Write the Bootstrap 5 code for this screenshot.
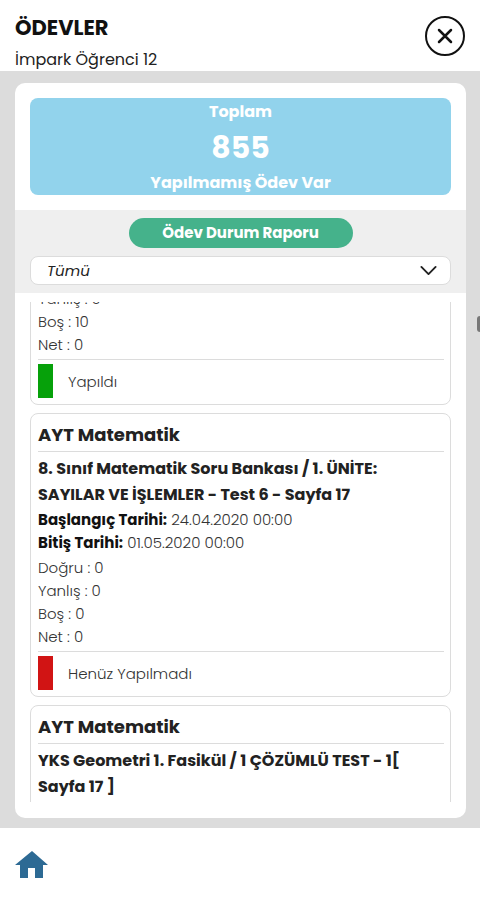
<!DOCTYPE html>
<html lang="tr">
<head>
<meta charset="utf-8">
<meta name="viewport" content="width=device-width, initial-scale=1">
<title>Ödevler</title>
<link href="https://cdn.jsdelivr.net/npm/bootstrap@5.3.0/dist/css/bootstrap.min.css" rel="stylesheet">
<style>
body{font-family:Poppins,Inter,"Liberation Sans",sans-serif;font-size:15px;line-height:23px;color:#333}
.page-title{font-size:21px;line-height:26px;color:#111}
.student{font-size:16px;line-height:22px;color:#222}
.app-header{padding:15px 15px 0}
.close-btn{width:40px;height:40px}
.stage{background:#dcdcdc;padding:12px 14px 10px 15px}
.panel{border-radius:10px}
.summary{background:#92d3ec;border-radius:8px;margin:15px 15px 15px;font-size:16px;line-height:28px;height:97px}
.summary-count{font-size:30px;line-height:43px}
.filters{background:#efefef;padding:8px 15px}
.report-btn,.report-btn:hover{background:#45b28b;color:#fff;width:224px;height:30px;font-size:15px;line-height:30px}
.filter-select{height:29px;font-size:15px;line-height:23px;border-radius:8px;border-color:#dcdcdc;color:#222;padding:2px 40px 2px 16px;background-size:19px 19px;background-position:right 12px center}
.filter-select{--bs-form-select-bg-img:none;background-image:url("data:image/svg+xml,%3csvg xmlns='http://www.w3.org/2000/svg' viewBox='0 0 16 16'%3e%3cpath fill='none' stroke='%23222' stroke-linecap='round' stroke-linejoin='round' stroke-width='1.6' d='m2 5 6 6 6-6'/%3e%3c/svg%3e")}
.task-list{margin:9px 15px 16px;gap:8px;scrollbar-width:none}
.task-list::-webkit-scrollbar{display:none}
.task{border:1px solid #dcdcdc;border-radius:8px;padding:5px 6px 6px 7px;font-weight:300}
.task:last-child{padding-bottom:30px}
.task-title{font-size:18px;line-height:32px;color:#222;border-bottom:1px solid #dcdcdc;margin-bottom:4px}
.task-link,.task-link:hover{font-size:16px;line-height:26px;color:#222}
.task-score{margin-top:2px}
.task-status{border-top:1px solid #dcdcdc;margin-top:3px;padding-top:4px;gap:15px}
.flag{width:15px;height:34px}
.flag-done{background:#06a10a}
.flag-open{background:#d11414}
.date-label{color:#111;font-weight:700}
.edge-grip{width:3px;height:16px;top:316px;background:#777;border-radius:3px 0 0 3px}
.app-footer{padding:22px 15px 17px}
</style>
<script src="https://cdn.jsdelivr.net/npm/bootstrap@5.3.0/dist/js/bootstrap.bundle.min.js"></script>
</head>
<body class="d-flex flex-column vh-100 bg-white overflow-hidden position-relative">
<header class="app-header d-flex justify-content-between align-items-start">
  <div>
    <h1 class="page-title fw-bold mb-0">ÖDEVLER</h1>
    <div class="student pt-2">İmpark Öğrenci 12</div>
  </div>
  <button type="button" class="close-btn btn p-0 border-0 d-flex" aria-label="Kapat">
    <svg width="40" height="42" viewBox="0 0 40 42" fill="none" stroke="#111"><circle cx="20" cy="21" r="19" stroke-width="2"/><path d="m14 15 12 12m0-12L14 27" stroke-width="2.5" stroke-linecap="round"/></svg>
  </button>
</header>
<main class="stage flex-grow-1 d-flex flex-column overflow-hidden">
  <div class="panel bg-white flex-grow-1 d-flex flex-column overflow-hidden">
    <section class="summary flex-shrink-0 text-white text-center fw-bold">
      <div>Toplam</div>
      <div class="summary-count">855</div>
      <div>Yapılmamış Ödev Var</div>
    </section>
    <div class="filters d-flex flex-column align-items-center gap-2 flex-shrink-0">
      <button type="button" class="report-btn btn rounded-pill p-0 border-0 fw-bold">Ödev Durum Raporu</button>
      <select class="filter-select form-select fst-italic" aria-label="Ödev durumu"><option>Tümü</option></select>
    </div>
    <div class="task-list d-flex flex-column flex-grow-1 overflow-auto" id="tasks">
      <article class="task flex-shrink-0">
        <div>Yanlış : 0</div>
        <div>Boş : 10</div>
        <div>Net : 0</div>
        <div class="task-status d-flex align-items-center"><span class="flag flag-done"></span>Yapıldı</div>
      </article>
      <article class="task flex-shrink-0">
        <h2 class="task-title fw-bold">AYT Matematik</h2>
        <a href="#" class="task-link d-block fw-bold text-decoration-none">8. Sınıf Matematik Soru Bankası / 1. ÜNİTE: SAYILAR VE İŞLEMLER - Test 6 - Sayfa 17</a>
        <div><b class="date-label">Başlangıç Tarihi:</b> 24.04.2020 00:00</div>
        <div><b class="date-label">Bitiş Tarihi:</b> 01.05.2020 00:00</div>
        <div class="task-score">
          <div>Doğru : 0</div>
          <div>Yanlış : 0</div>
          <div>Boş : 0</div>
          <div>Net : 0</div>
        </div>
        <div class="task-status d-flex align-items-center"><span class="flag flag-open"></span>Henüz Yapılmadı</div>
      </article>
      <article class="task flex-shrink-0">
        <h2 class="task-title fw-bold">AYT Matematik</h2>
        <a href="#" class="task-link d-block fw-bold text-decoration-none">YKS Geometri 1. Fasikül / 1 ÇÖZÜMLÜ TEST - 1[ Sayfa 17 ]</a>
      </article>
    </div>
  </div>
</main>
<footer class="app-footer d-flex">
  <a href="#" aria-label="Ana sayfa"><svg class="d-block" width="33" height="33" viewBox="0 0 33 33" fill="#2d6a94"><path d="M17 1 33 15H28V28H20V18H13V28H5V15H0Z"/></svg></a>
</footer>
<span class="edge-grip position-absolute end-0"></span>
<script>
const tasks = document.getElementById('tasks');
tasks.scrollTop = 21;
</script>
</body>
</html>
